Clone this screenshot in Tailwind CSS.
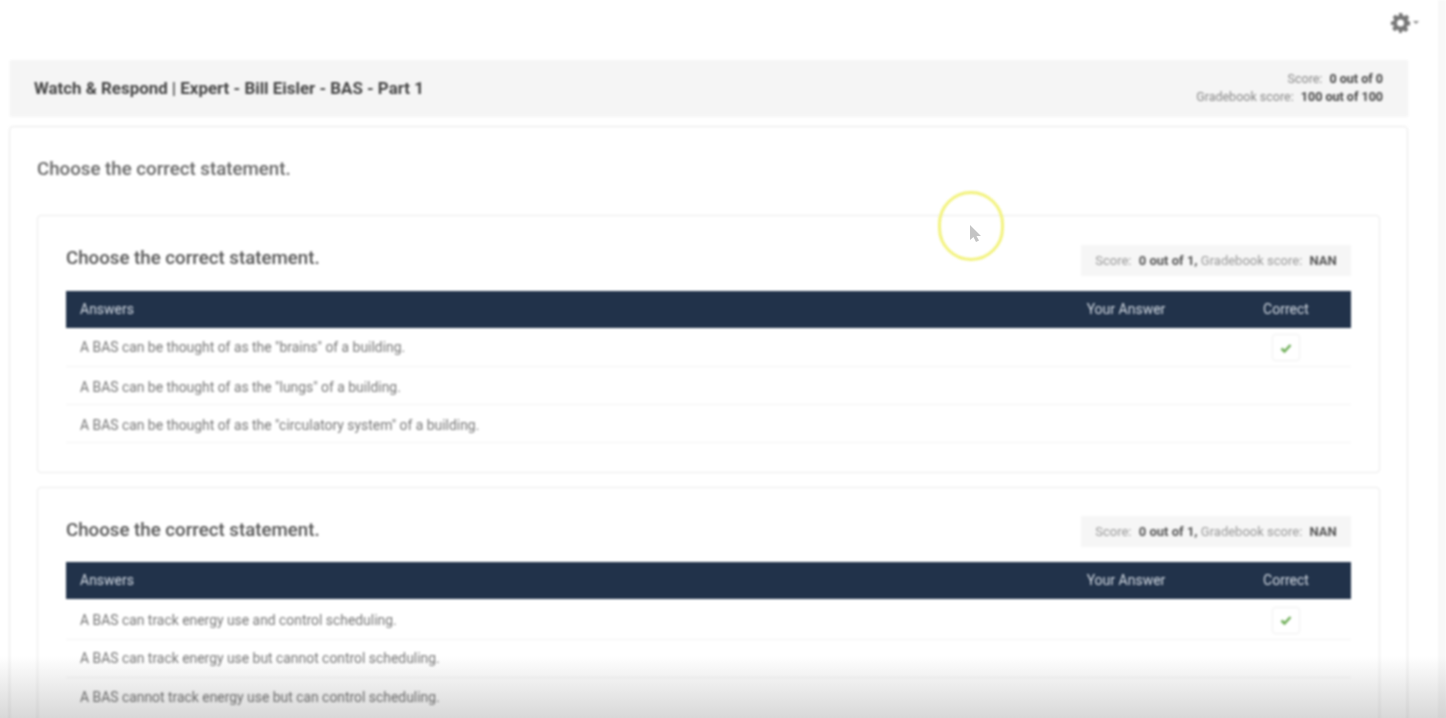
<!doctype html>
<html lang="en">
  <head>
    <meta charset="UTF-8" />
    <meta name="viewport" content="width=device-width, initial-scale=1.0" />
    <title>Watch &amp; Respond</title>
    <script src="https://cdn.jsdelivr.net/npm/@tailwindcss/browser@4"></script>
  </head>
  <body class="bg-white overflow-hidden font-['Roboto',sans-serif]">
    <div class="relative w-[1446px] h-[718px] overflow-hidden">
      <div class="blur-[0.9px] h-full pl-[9px] pr-[30px] border-r-8 border-[#f8f8f8]">
        <!-- Gear -->
        <div class="h-[60px] flex items-start justify-end pt-[12px] -mr-[14px] text-[#777]">
          <svg class="w-[21px] h-[21px]" viewBox="0 0 24 24" fill="currentColor">
            <path fill-rule="evenodd" d="M10 1h4l.6 3.1 1.8.8 2.700-1.800 2.800 2.800-1.800 2.700.8 1.800L23 11v4l-3.100.6-.8 1.800 1.800 2.700-2.800 2.800-2.700-1.800-1.800.8L13.500 24h-3l-.6-3.100-1.800-.8-2.700 1.800-2.800-2.800 1.800-2.700-.8-1.800L1 15v-4l3.100-.6.8-1.800-1.800-2.700 2.800-2.800 2.700 1.800 1.800-.8zM12 8.500a4 4 0 1 0 0 8 4 4 0 0 0 0-8z" />
          </svg>
          <span class="ml-[2px] mr-[3px] mt-[9px] w-0 h-0 border-x-[3px] border-t-[3px] border-x-transparent border-t-[#888]"></span>
        </div>

        <!-- Title bar -->
        <div class="h-[56px] ml-px bg-[#f5f5f5] flex items-center justify-between pl-[24px] pr-[25px] shadow-[0_1px_2px_rgba(0,0,0,0.04)]">
          <h1 class="pt-[2px] text-[16.900px] font-bold text-[#444]">Watch &amp; Respond | Expert - Bill Eisler - BAS - Part 1</h1>
          <div class="text-[12.500px] leading-[18px] text-right text-[#888]">
            <p>Score: <b class="ml-1 text-[#444]">0 out of 0</b></p>
            <p>Gradebook score: <b class="ml-1 text-[#444]">100 out of 100</b></p>
          </div>
        </div>

        <!-- Main card -->
        <div class="mt-[10px] h-[620px] bg-white border border-[#e8e8e8] rounded-sm pt-[31px] px-[27px]">
          <h2 class="text-[18.700px] leading-[22px] font-medium text-[#666]">Choose the correct statement.</h2>

          <!-- Question 1 -->
          <section class="mt-[35px] h-[258px] border border-[#eaeaea] rounded-sm pt-[29px] px-[28px]">
            <div class="flex items-center justify-between h-[31px]">
              <h3 class="mb-[4px] text-[18.700px] font-medium text-[#555]">Choose the correct statement.</h3>
              <div class="w-[270px] h-[31px] bg-[#f6f6f6] flex items-center justify-center text-[13px] text-[#999]">
                <span>Score: <b class="ml-1 text-[#555]">0 out of 1,</b> Gradebook score: <b class="ml-1 text-[#555]">NAN</b></span>
              </div>
            </div>
            <div class="mt-[15px] h-[37px] bg-[#21324a] text-[#d3dae3] text-[14px] flex items-center pl-[14px]">
              <span class="flex-1">Answers</span>
              <span class="w-[110px] mr-[40px] text-center">Your Answer</span>
              <span class="w-[130px] text-center">Correct</span>
            </div>
            <div class="text-[13.900px] text-[#777]">
              <div class="h-[39px] flex items-center pl-[14px] pt-px border-b border-[#f4f4f4]">
                <span class="flex-1">A BAS can be thought of as the "brains" of a building.</span>
                <span class="w-[28px] h-[27px] mr-[51px] border border-[#f2f2f2] rounded-sm flex items-center justify-center shadow-[0_0_2px_rgba(0,0,0,0.05)]">
                  <svg class="w-3 h-3 text-[#6fae58]" viewBox="0 0 24 24" fill="none" stroke="currentColor" stroke-width="5"><path d="M3 13l6 6L21 6" /></svg>
                </span>
              </div>
              <div class="h-[38px] flex items-center pl-[14px] pt-[3px] border-b border-[#f4f4f4]">A BAS can be thought of as the "lungs" of a building.</div>
              <div class="h-[38px] flex items-center pl-[14px] pt-[3px] border-b border-[#f4f4f4]">A BAS can be thought of as the "circulatory system" of a building.</div>
            </div>
          </section>

          <!-- Question 2 -->
          <section class="mt-[14px] h-[300px] border border-[#eaeaea] rounded-sm pt-[28px] px-[28px]">
            <div class="flex items-center justify-between h-[31px]">
              <h3 class="mb-[2px] text-[18.700px] font-medium text-[#555]">Choose the correct statement.</h3>
              <div class="w-[270px] h-[31px] bg-[#f6f6f6] flex items-center justify-center text-[13px] text-[#999]">
                <span>Score: <b class="ml-1 text-[#555]">0 out of 1,</b> Gradebook score: <b class="ml-1 text-[#555]">NAN</b></span>
              </div>
            </div>
            <div class="mt-[15px] h-[37px] bg-[#21324a] text-[#d3dae3] text-[14px] flex items-center pl-[14px]">
              <span class="flex-1">Answers</span>
              <span class="w-[110px] mr-[40px] text-center">Your Answer</span>
              <span class="w-[130px] text-center">Correct</span>
            </div>
            <div class="text-[13.900px] text-[#777]">
              <div class="h-[41px] flex items-center pl-[14px] pt-[2px] border-b border-[#f4f4f4]">
                <span class="flex-1">A BAS can track energy use and control scheduling.</span>
                <span class="w-[28px] h-[27px] mr-[51px] border border-[#f2f2f2] rounded-sm flex items-center justify-center shadow-[0_0_2px_rgba(0,0,0,0.05)]">
                  <svg class="w-3 h-3 text-[#6fae58]" viewBox="0 0 24 24" fill="none" stroke="currentColor" stroke-width="5"><path d="M3 13l6 6L21 6" /></svg>
                </span>
              </div>
              <div class="h-[38px] flex items-center pl-[14px] border-b border-[#f4f4f4]">A BAS can track energy use but cannot control scheduling.</div>
              <div class="h-[38px] flex items-center pl-[14px]">A BAS cannot track energy use but can control scheduling.</div>
            </div>
          </section>
        </div>
      </div>

      <!-- Cursor highlight -->
      <div class="absolute left-[938px] top-[191px] w-[66px] h-[70px] rounded-full border-[3px] border-[#f2f27a] blur-[0.8px]"></div>
      <svg class="absolute left-[968px] top-[224px] w-[15px] h-[20px] text-[#c4c4c4] blur-[0.5px]" viewBox="0 0 15 20" fill="currentColor"><path d="M2 1v15l3.500-3 2.500 5 3-1.500-2.500-4.500H13z" /></svg>

      <!-- Video fade at the bottom -->
      <div class="absolute inset-x-0 bottom-0 h-[62px] bg-gradient-to-b from-white to-[#d8d8d8] mix-blend-multiply"></div>
    </div>
  </body>
</html>
